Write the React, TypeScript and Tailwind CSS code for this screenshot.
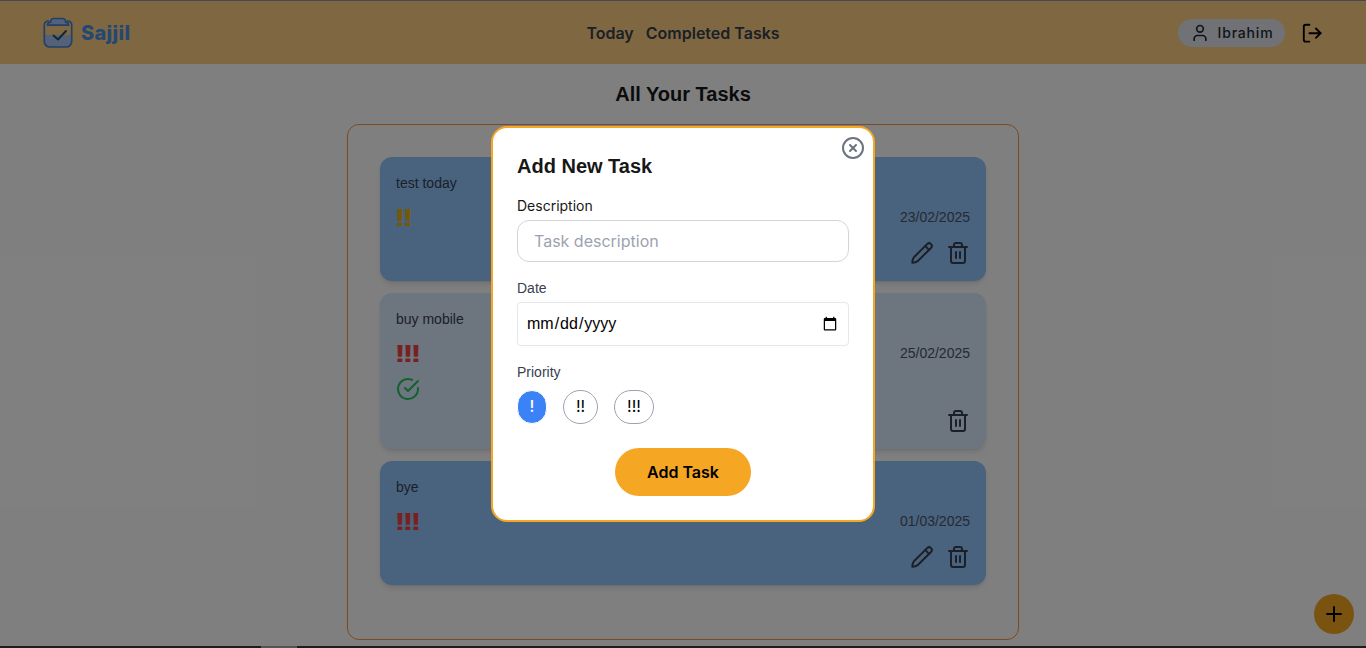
import React from "react";
import { LogOut, User, Trash2, Plus, CircleX } from "lucide-react";
import { FiCheckCircle } from "react-icons/fi";

type Task = {
  title: string;
  marks: string;
  tone: string;
  date: string;
  done: boolean;
};

const tasks: Task[] = [
  { title: "test today", marks: "!!", tone: "text-[#eab308]", date: "23/02/2025", done: false },
  { title: "buy mobile", marks: "!!!", tone: "text-[#ef4444]", date: "25/02/2025", done: true },
  { title: "bye", marks: "!!!", tone: "text-[#ef4444]", date: "01/03/2025", done: false },
];

function Logo() {
  return (
    <svg className="h-8 w-8" viewBox="0 0 32 32" fill="none" stroke="#4480d4" strokeWidth="1.7" strokeLinecap="round" strokeLinejoin="round">
      <path d="M2.5 18h27v7a5 5 0 0 1-5 5h-17a5 5 0 0 1-5-5z" fill="#a9c2ee" stroke="none" />
      <path d="M6.5 4C4 4 2.300 5.500 2.300 8v16.500a5.500 5.500 0 0 0 5.500 5.500h16.400a5.500 5.500 0 0 0 5.500-5.500V8c0-2.500-1.700-4-4.200-4" />
      <path d="M8.5 5.200c0-2.400 1.200-3.700 3.300-3.700h8.600c2.100 0 3.300 1.300 3.300 3.700 2 0 2.800 1 2.900 3H5.400c.1-2 1-3 3.100-3z" fill="#a9c2ee" />
      <path d="M11.500 18.500l4.500 4 8-8.500" stroke="#1c4f80" strokeWidth="1.900" />
    </svg>
  );
}

function PencilIcon() {
  return (
    <svg className="h-6 w-6" viewBox="0 0 24 24" fill="none" stroke="currentColor" strokeWidth="2" strokeLinecap="round" strokeLinejoin="round">
      <path d="M2.300 21.700c0-2.200.5-4.300 1.700-5.500L17.100 3.100a2.750 2.750 0 0 1 3.900 3.900L7.800 20c-1.200 1.200-3.300 1.700-5.500 1.700z" />
      <path d="M15.200 5l3.900 3.900" />
    </svg>
  );
}

function Header() {
  return (
    <header className="flex h-[63px] items-center justify-between bg-[#ffd082] pl-[42px] pr-[43px]">
      <div className="flex w-[301px] items-center gap-[7px]">
        <Logo />
        <span className="pt-px font-['Inter',sans-serif] text-[20px] font-extrabold tracking-[0.3px] text-[#4a90e2]">Sajjil</span>
      </div>
      <nav className="flex gap-3 pt-px font-['Inter',sans-serif] text-base font-semibold text-[#374151]">
        <span>Today</span>
        <span>Completed Tasks</span>
      </nav>
      <div className="flex w-[300px] items-center justify-end gap-4">
        <div className="flex h-7 w-[107px] items-center gap-2 rounded-full bg-[#e0e4ea] pl-3 text-[#1f2937]">
          <User size={20} />
          <span className="whitespace-nowrap font-['Inter',sans-serif] text-[14px] font-medium tracking-[0.8px]">Ibrahim</span>
        </div>
        <LogOut size={22.4} className="mt-px text-black" />
      </div>
    </header>
  );
}

function TaskCard({ task }: { task: Task }) {
  return (
    <article
      className={
        task.done
          ? "flex h-[156px] flex-col justify-between rounded-xl bg-[#dbeafe] p-4 shadow-md"
          : "flex h-[124px] flex-col justify-between rounded-xl bg-[#93c5fd] p-4 shadow-md"
      }
    >
      <div>
        <p className="text-sm leading-5 text-[#374151]">{task.title}</p>
        <div className="mt-2 flex items-start justify-between">
          <span className={`pt-px text-2xl font-bold leading-8 [text-shadow:0.8px_0_currentColor,-0.8px_0_currentColor] ${task.tone}`}>
            {task.marks}
          </span>
          <span className="mt-1.5 text-sm leading-5 text-[#4b5563]">{task.date}</span>
        </div>
        {task.done && <FiCheckCircle size={24} className="mt-[7px] text-[#22c55e]" />}
      </div>
      <div className="-mt-4 flex justify-end gap-3 text-[#374151]">
        {!task.done && <PencilIcon />}
        <Trash2 size={24} />
      </div>
    </article>
  );
}

function AddTaskDialog() {
  return (
    <div className="absolute inset-x-0 top-px bottom-0.5 flex items-center justify-center bg-black/50">
      <section className="relative mt-px h-[396px] w-96 rounded-2xl border-2 border-[#f5a623] bg-white p-6 text-[#171717]">
        <button className="absolute top-2 right-2 text-[#6b7280]" aria-label="Close">
          <CircleX size={24} />
        </button>
        <h2 className="text-xl font-bold leading-7">Add New Task</h2>
        <label className="mt-4 block font-['Inter',sans-serif] text-sm leading-5">Description</label>
        <input
          className="mt-1 block h-[42px] w-full rounded-xl border border-[#d1d5db] px-4 font-['Inter',sans-serif] text-base placeholder:text-[#9ca3af]"
          placeholder="Task description"
        />
        <label className="mt-4 block text-sm leading-5 text-[#374151]">Date</label>
        <input type="date" className="mt-1 block h-11 w-full rounded border border-[#e5e7eb] px-2 text-base text-black" />
        <p className="mt-4 text-sm leading-5 text-[#374151]">Priority</p>
        <div className="mt-2 flex gap-4 font-['Inter',sans-serif] text-base">
          <button className="h-[34px] w-[30px] rounded-full border border-white bg-[#3b82f6] pb-0.5 font-medium text-white">!</button>
          <button className="h-[34px] w-[35px] rounded-full border border-[#9ca3af] pb-0.5 text-black">!!</button>
          <button className="h-[34px] w-10 rounded-full border border-[#9ca3af] pb-0.5 text-black">!!!</button>
        </div>
        <div className="mt-6 flex justify-center">
          <button className="h-12 w-[136px] rounded-full bg-[#f5a623] font-['Inter',sans-serif] text-base font-semibold text-black">
            Add Task
          </button>
        </div>
      </section>
    </div>
  );
}

export default function App() {
  return (
    <div className="relative flex h-[648px] w-[1366px] flex-col overflow-hidden bg-white font-['Liberation_Sans',Arial,sans-serif]">
      <div className="h-px shrink-0 bg-[#484855]" />
      <Header />
      <main className="flex flex-1 flex-col items-center pt-4">
        <h1 className="text-xl font-bold leading-7 text-[#171717]">All Your Tasks</h1>
        <div className="mt-4 flex h-[516px] w-[672px] flex-col gap-3 rounded-xl border border-[#fb923c] p-8">
          {tasks.map((task) => (
            <TaskCard key={task.title} task={task} />
          ))}
        </div>
      </main>
      <button className="absolute right-3 bottom-3.5 flex h-10 w-10 items-center justify-center rounded-full bg-[#f5a623] text-black" aria-label="Add">
        <Plus size={24} />
      </button>
      <div className="flex h-0.5 shrink-0 bg-[#1f1b20] pl-[261px]">
        <div className="h-0.5 w-9 bg-[#555355]" />
      </div>
      <AddTaskDialog />
    </div>
  );
}
